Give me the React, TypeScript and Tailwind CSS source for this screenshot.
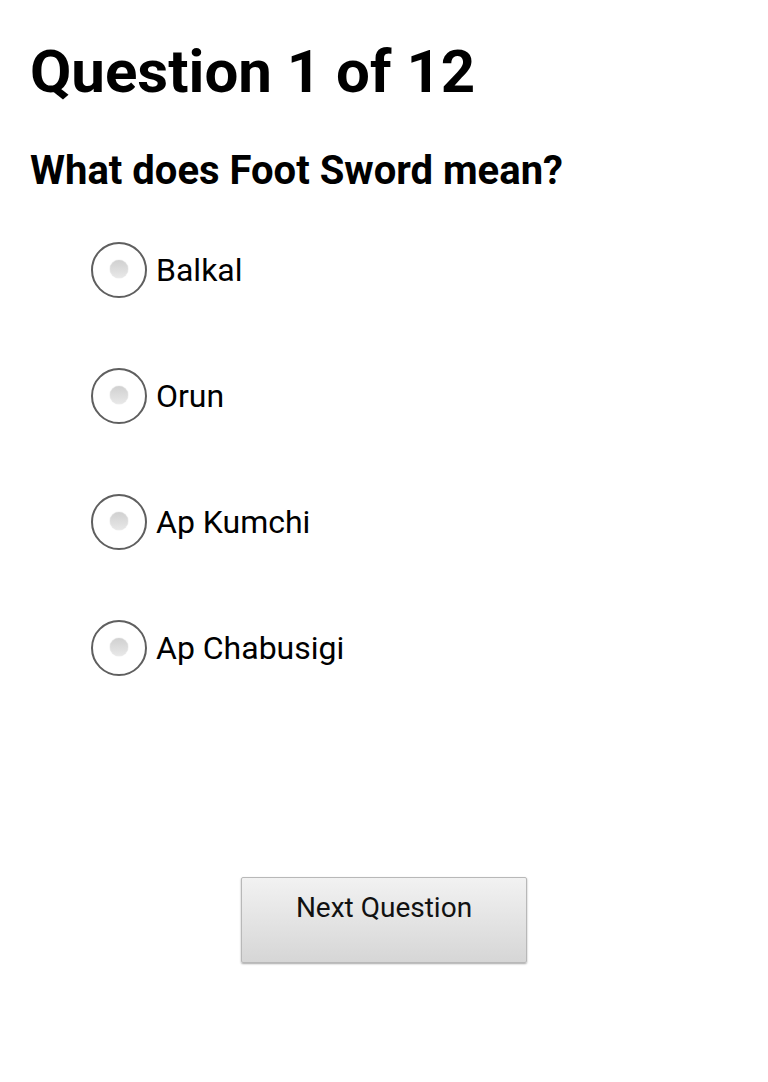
import { useState } from 'react';

const options = ['Balkal', 'Orun', 'Ap Kumchi', 'Ap Chabusigi'];

function RadioCircle({ checked }: { checked: boolean }) {
    return (
        <span className="relative flex h-[56px] w-[56px] shrink-0 items-center justify-center rounded-full border-[2.5px] border-[#5f5f5f] bg-white">
            <span
                className={
                    checked
                        ? 'mb-[3px] h-[18px] w-[18px] rounded-full bg-[#33b5e5]'
                        : 'mb-[3px] h-[18px] w-[18px] rounded-full bg-gradient-to-b from-[#d0d0d0] to-[#e8e8e8] shadow-[0_0_1px_#aaa]'
                }
            />
        </span>
    );
}

export default function App() {
    const [selected, setSelected] = useState<number | null>(null);

    return (
        <div className="min-h-[1082px] bg-white px-[30px] pt-[36px] text-black" style={{ fontFamily: 'Roboto, "Noto Sans", sans-serif' }}>
            <h1 className="text-[60px] font-bold leading-[72px]">Question 1 of 12</h1>

            <h2 className="mt-[40px] text-[40px] font-bold leading-[46px]">What does Foot Sword mean?</h2>

            <div className="mt-[48px] flex flex-col gap-[70px] pl-[61px]">
                {options.map((option, i) => (
                    <label
                        key={option}
                        className="flex h-[56px] cursor-pointer items-center gap-[9px]"
                        onClick={() => setSelected(i)}
                    >
                        <RadioCircle checked={selected === i} />
                        <span className="text-[32px] leading-none">{option}</span>
                    </label>
                ))}
            </div>

            <div className="mt-[201px] flex justify-center">
                <button className="h-[86px] w-[286px] rounded-[2px] border border-[#b8b8b8] bg-gradient-to-b from-[#f2f2f2] to-[#d6d6d6] pb-[24px] text-[28px] text-[#111] shadow-[0_1px_2px_rgba(0,0,0,0.35)]">
                    Next Question
                </button>
            </div>
        </div>
    );
}
